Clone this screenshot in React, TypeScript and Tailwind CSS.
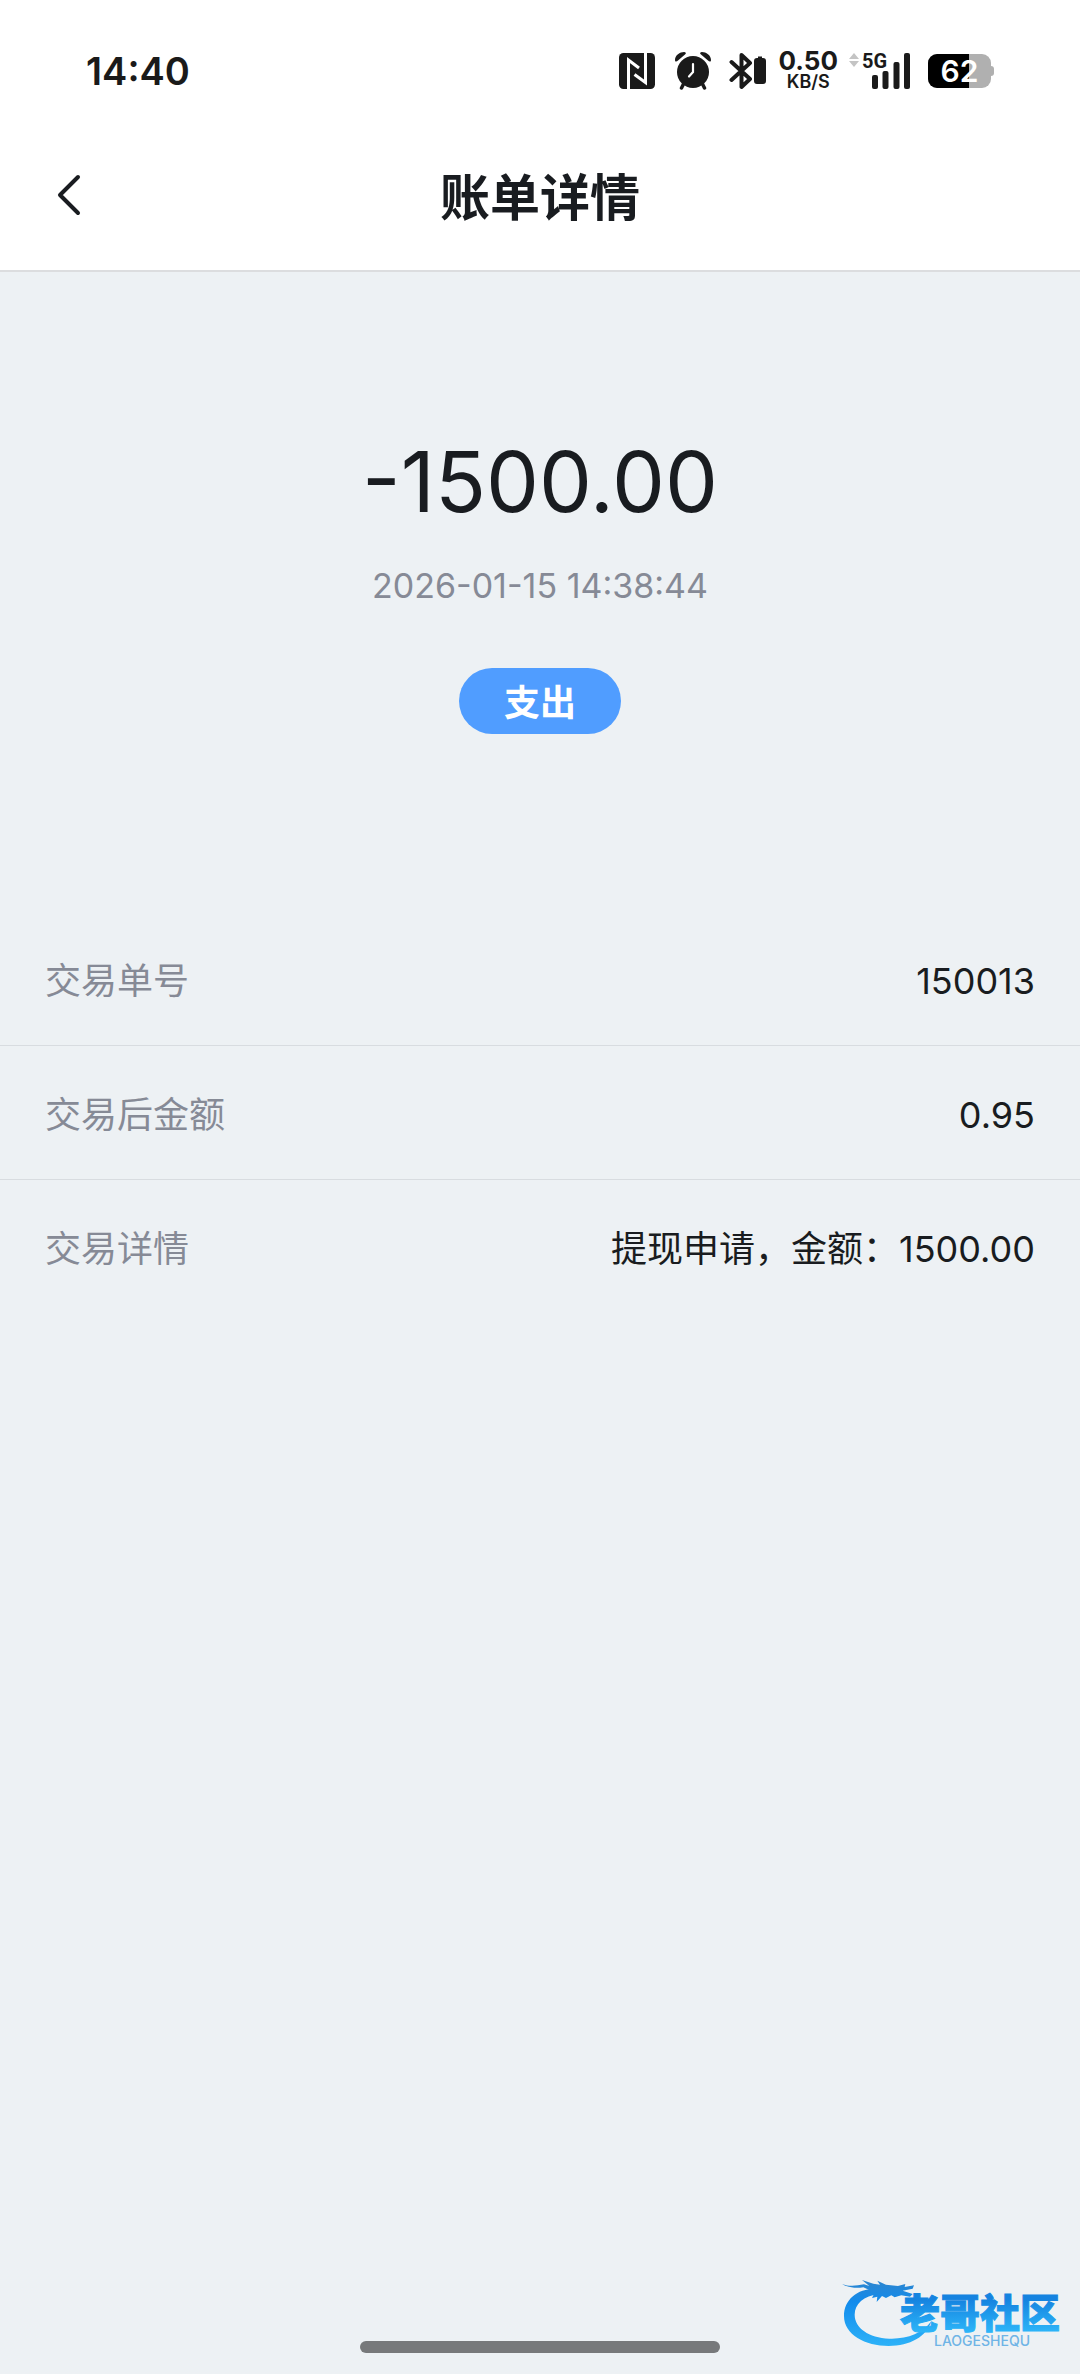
import React from "react";

const details = [
  { label: "交易单号", value: "150013" },
  { label: "交易后金额", value: "0.95" },
  { label: "交易详情", value: "提现申请，金额：1500.00" },
];

const NfcIcon: React.FC = () => (
  <svg width="36" height="36" viewBox="0 0 36 36" aria-hidden="true">
    <rect width="36" height="36" rx="4.5" fill="#1a1a1a" />
    <path d="M9.5 36V7L20 15" fill="none" stroke="#fff" strokeWidth="3" />
    <path d="M26.5 0V29.5L15.5 21.5" fill="none" stroke="#fff" strokeWidth="3" />
  </svg>
);

const AlarmIcon: React.FC = () => (
  <svg width="36" height="38" viewBox="0 0 36 38" aria-hidden="true">
    <g fill="#1a1a1a">
      <circle cx="18" cy="20" r="16" />
      <path d="M0 8C0 3 5 0 9 0C11 0 11.5 1.5 10 2.5L3 8.5C1.5 10 0 10 0 8Z" />
      <path d="M36 8C36 3 31 0 27 0C25 0 24.5 1.5 26 2.5L33 8.5C34.5 10 36 10 36 8Z" />
    </g>
    <path d="M9 31L6.5 36M27 31L29.5 36" stroke="#1a1a1a" strokeWidth="3.5" strokeLinecap="round" />
    <path d="M18 12V20L14 24.5" fill="none" stroke="#fff" strokeWidth="2.2" strokeLinecap="round" />
  </svg>
);

const BluetoothIcon: React.FC = () => (
  <svg width="38" height="38" viewBox="0 0 38 38" aria-hidden="true">
    <path
      d="M2.5 10L21 27L12.5 35V3L21 11L2.5 28"
      fill="none"
      stroke="#1a1a1a"
      strokeWidth="4"
      strokeLinecap="round"
      strokeLinejoin="round"
    />
    <path d="M29 4.5H33V6H34Q37 6 37 9V29Q37 32 34 32H28Q25 32 25 29V9Q25 6 28 6H29Z" fill="#1a1a1a" />
  </svg>
);

const SignalIcon: React.FC = () => (
  <svg width="38" height="36" viewBox="0 0 38 36" fill="#1a1a1a" aria-hidden="true">
    <rect y="22" width="6" height="14" rx="2" />
    <rect x="10.5" y="18" width="6" height="18" rx="2" />
    <rect x="21.5" y="9" width="6" height="27" rx="2" />
    <rect x="32" width="6" height="36" rx="2" />
  </svg>
);

const StatusBar: React.FC = () => (
  <div className="flex h-[142px] items-center justify-between px-[86px]">
    <span className="text-[38px] leading-none font-semibold text-[#1a1a1a]">14:40</span>
    <div className="flex items-center text-[#1a1a1a]">
      <NfcIcon />
      <span className="ml-5">
        <AlarmIcon />
      </span>
      <span className="ml-[18px]">
        <BluetoothIcon />
      </span>
      <div className="ml-3 flex flex-col items-center">
        <span className="text-[26px] leading-[22px] font-bold">0.50</span>
        <span className="text-[18px] leading-[20px] font-semibold">KB/S</span>
      </div>
      <div className="relative ml-[34px]">
        <SignalIcon />
        <svg className="absolute top-0 -left-6" width="12" height="14" viewBox="0 0 12 14" fill="#c4c4c4" aria-hidden="true">
          <path d="M6 0L11 6H1ZM6 14L11 8H1Z" />
        </svg>
        <span className="absolute -top-0.5 -left-2.5 font-[Roboto] text-[20px] leading-[20px] font-bold">5G</span>
      </div>
      {/* Battery */}
      <div className="ml-[18px] flex items-center">
        <div className="relative flex h-[34px] w-[63px] items-center justify-center overflow-hidden rounded-[9px] bg-[#b0b0b0]">
          <div className="absolute inset-y-0 left-0 w-[41px] bg-black" />
          <span className="relative text-[30px] leading-none font-semibold text-white">62</span>
        </div>
        <div className="h-[10px] w-[3px] rounded-r-sm bg-[#b0b0b0]" />
      </div>
    </div>
  </div>
);

const Watermark: React.FC = () => (
  <svg
    className="absolute right-[18px] bottom-[22px]"
    width="222"
    height="76"
    viewBox="0 0 222 76"
    role="img"
    aria-label="老哥社区"
  >
    <defs>
      <linearGradient id="dragon" x1="0" y1="0" x2="0" y2="222" gradientUnits="userSpaceOnUse">
        <stop offset="0.15" stopColor="#2a86d2" />
        <stop offset="0.4" stopColor="#128bec" />
        <stop offset="1" stopColor="#2db2f8" />
      </linearGradient>
      <linearGradient id="name" x1="0" y1="0" x2="0" y2="1">
        <stop offset="0.3" stopColor="#1583e0" />
        <stop offset="0.85" stopColor="#2cb4f8" />
      </linearGradient>
    </defs>
    <g transform="translate(-4 -4) scale(0.3333)" fill="url(#dragon)">
      {/* body */}
      <path d="M118 50C62 50 24 84 24 132C24 188 88 222 158 222C222 222 272 194 286 148C260 184 212 202 160 200C98 197 56 168 56 128C56 96 82 72 130 66Z" />
      {/* head, horns and whiskers */}
      <path d="M18 36C38 44 60 42 84 37L100 42L78 24L112 35L132 38L124 26L150 38L186 42L208 36L206 45L234 40L230 50L200 56L230 66L222 74L196 70L176 76L166 70L150 78L138 72L122 90L124 74L108 78L114 66L90 66L100 54L82 46C58 50 34 46 18 36Z" />
    </g>
    <text
      x="60"
      y="52"
      fill="url(#name)"
      stroke="url(#name)"
      strokeWidth="1"
      className="font-['Noto_Sans_CJK_SC',sans-serif] text-[40px] font-black"
    >
      老哥社区
    </text>
    <text x="94" y="70" fill="#6fb4e6" className="font-[Inter,sans-serif] text-[14px] font-medium">
      LAOGESHEQU
    </text>
  </svg>
);

const App: React.FC = () => {
  return (
    <div className="relative flex min-h-screen flex-col bg-[#edf1f4] font-[Inter,'Noto_Sans_CJK_SC',sans-serif] text-[#191c20]">
      <header className="border-b-2 border-[#dcdddf] bg-white">
        <StatusBar />
        <div className="grid h-32 grid-cols-[1fr_auto_1fr] items-start px-[45px]">
          <button type="button" aria-label="返回" className="mt-8 w-12 cursor-pointer pl-3">
            <svg width="24" height="42" viewBox="0 0 24 42" aria-hidden="true">
              <path d="M21 3L3 21L21 39" fill="none" stroke="#191c20" strokeWidth="4" strokeLinecap="round" strokeLinejoin="round" />
            </svg>
          </button>
          <h1 className="mt-[26px] text-[50px] leading-[60px] font-bold">账单详情</h1>
        </div>
      </header>

      <main>
        <section className="flex flex-col items-center pt-[158px] pb-[178px]">
          <p className="text-[84px] leading-[104px]">-1500.00</p>
          <time dateTime="2026-01-15T14:38:44" className="mt-7 text-[34px] leading-[48px] text-[#868a96]">
            2026-01-15 14:38:44
          </time>
          <span className="mt-[58px] flex h-[66px] items-center rounded-full bg-[#509dff] px-[45px] pt-1 text-[36px] leading-none font-bold text-white">
            支出
          </span>
        </section>

        <dl>
          {details.map((item) => (
            <div
              key={item.label}
              className="flex h-[134px] items-center justify-between border-b border-[#d8dce0] px-[45px] pt-1 text-[36px] leading-[48px] last:border-b-0"
            >
              <dt className="text-[#868a96]">{item.label}</dt>
              <dd>{item.value}</dd>
            </div>
          ))}
        </dl>
      </main>

      {/* Home indicator */}
      <div className="mx-auto mt-auto mb-[21px] h-3 w-1/3 rounded-full bg-[#77797b]" />
      <Watermark />
    </div>
  );
};

export default App;
